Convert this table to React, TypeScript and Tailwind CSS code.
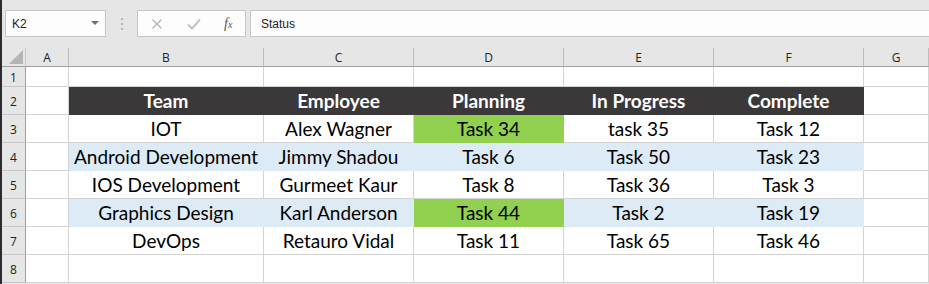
import React from "react";

const cols = ["A", "B", "C", "D", "E", "F", "G"];
const gridCols = "grid grid-cols-[24px_43px_195px_150px_150px_150px_150px_65px]";

type Fill = "dark" | "blue" | "green" | "none";

const rows: { team: string; emp: string; tasks: string[]; fill: Fill[] }[] = [
  { team: "IOT", emp: "Alex Wagner", tasks: ["Task 34", "task 35", "Task 12"], fill: ["none", "none", "green", "none", "none"] },
  { team: "Android Development", emp: "Jimmy Shadou", tasks: ["Task 6", "Task 50", "Task 23"], fill: ["blue", "blue", "blue", "blue", "blue"] },
  { team: "IOS Development", emp: "Gurmeet Kaur", tasks: ["Task 8", "Task 36", "Task 3"], fill: ["none", "none", "none", "none", "none"] },
  { team: "Graphics Design", emp: "Karl Anderson", tasks: ["Task 44", "Task 2", "Task 19"], fill: ["blue", "blue", "green", "blue", "blue"] },
  { team: "DevOps", emp: "Retauro Vidal", tasks: ["Task 11", "Task 65", "Task 46"], fill: ["none", "none", "none", "none", "none"] },
];

const fillClass: Record<Fill, string> = {
  dark: "bg-[#3a3838] border-[#3a3838] text-white font-bold",
  blue: "bg-[#ddebf7] border-[#ddebf7] text-black",
  green: "bg-[#92d050] border-[#92d050] text-black",
  none: "bg-white border-[#d4d4d4] text-black",
};

function RowHead({ n, h }: { n: number; h: string }) {
  return (
    <div
      className={`${h} flex items-center justify-center bg-[#e6e6e6] border-r border-b border-r-[#9e9e9e] border-b-[#c8c8c8] text-[12px] text-[#222] pt-[2px]`}
      style={{ fontFamily: "'Open Sans', sans-serif" }}
    >
      {n}
    </div>
  );
}

function Cell({ text, fill = "none" }: { text?: string; fill?: Fill }) {
  return (
    <div className={`h-[28px] flex items-center justify-center border-r border-b whitespace-nowrap overflow-hidden text-[19px] pt-[1px] ${fillClass[fill]}`}>
      {text}
    </div>
  );
}

export default function App() {
  return (
    <div className="w-[929px] h-[284px] overflow-hidden border-l-2 border-[#2b2b2b] bg-[#e6e6e6]" style={{ fontFamily: "Lato, 'Liberation Sans', sans-serif" }}>
      {/* formula bar */}
      <div className="h-[48px] flex items-start pt-[10px] pl-[3px]" style={{ fontFamily: "'Liberation Sans', Arial, sans-serif" }}>
        <div className="w-[101px] h-[27px] bg-[#fdfdfd] border border-[#c6c6c6] flex items-center justify-between pl-[6px] pr-[6px] text-[12px] text-[#222]">
          <span>K2</span>
          <svg width="8" height="5" viewBox="0 0 8 5"><path d="M0 0h8L4 4z" fill="#6f6f6f" /></svg>
        </div>
        <div className="w-[31px] h-[27px] flex flex-col items-center justify-center gap-[3px]">
          <span className="w-[2px] h-[2px] bg-[#b3b3b3]" />
          <span className="w-[2px] h-[2px] bg-[#b3b3b3]" />
          <span className="w-[2px] h-[2px] bg-[#b3b3b3]" />
        </div>
        <div className="w-[109px] h-[27px] bg-[#fdfdfd] border border-[#c6c6c6] flex items-center pl-[13px]">
          <svg width="12" height="12" viewBox="0 0 12 12"><path d="M1.5 1.5l9 9M10.5 1.5l-9 9" stroke="#b5b5b5" strokeWidth="1.3" /></svg>
          <svg className="ml-[24px]" width="14" height="12" viewBox="0 0 14 12"><path d="M1 6.5l4 4L13 1.5" stroke="#b5b5b5" strokeWidth="1.6" fill="none" /></svg>
          <span className="ml-[23px] text-[14px] italic text-[#555]" style={{ fontFamily: "'Liberation Serif', serif" }}>f<span className="text-[10px]">x</span></span>
        </div>
        <div className="ml-[4px] flex-1 h-[27px] bg-[#fdfdfd] border border-[#c6c6c6] border-r-0 flex items-center pl-[10px] text-[12px] text-[#222]">
          Status
        </div>
      </div>

      {/* column headers */}
      <div className={gridCols} style={{ fontFamily: "'Open Sans', sans-serif" }}>
        <div className="h-[19px] bg-[#e6e6e6] border-r border-b border-r-[#c8c8c8] border-b-[#9e9e9e] flex items-end justify-end pr-[2px] pb-[2px]">
          <svg width="14" height="14" viewBox="0 0 14 14"><path d="M14 0V14H0z" fill="#b4b4b4" /></svg>
        </div>
        {cols.map((c) => (
          <div key={c} className="h-[19px] bg-[#e6e6e6] border-r border-b border-r-[#bdbdbd] border-b-[#9e9e9e] flex items-center justify-center text-[12px] text-[#222] pt-[2px]">
            {c}
          </div>
        ))}
      </div>

      {/* row 1 */}
      <div className={gridCols}>
        <RowHead n={1} h="h-[20px]" />
        {cols.map((c) => (
          <div key={c} className="h-[20px] bg-white border-r border-b border-[#d4d4d4]" />
        ))}
      </div>

      {/* row 2: table header */}
      <div className={gridCols}>
        <RowHead n={2} h="h-[28px]" />
        <Cell />
        {["Team", "Employee", "Planning", "In Progress", "Complete"].map((t) => (
          <Cell key={t} text={t} fill="dark" />
        ))}
        <Cell />
      </div>

      {rows.map((r, i) => (
        <div key={r.team} className={gridCols}>
          <RowHead n={i + 3} h="h-[28px]" />
          <Cell />
          <Cell text={r.team} fill={r.fill[0]} />
          <Cell text={r.emp} fill={r.fill[1]} />
          <Cell text={r.tasks[0]} fill={r.fill[2]} />
          <Cell text={r.tasks[1]} fill={r.fill[3]} />
          <Cell text={r.tasks[2]} fill={r.fill[4]} />
          <Cell />
        </div>
      ))}

      {/* row 8 */}
      <div className={gridCols}>
        <RowHead n={8} h="h-[28px]" />
        {cols.map((c) => (
          <Cell key={c} />
        ))}
      </div>
    </div>
  );
}
